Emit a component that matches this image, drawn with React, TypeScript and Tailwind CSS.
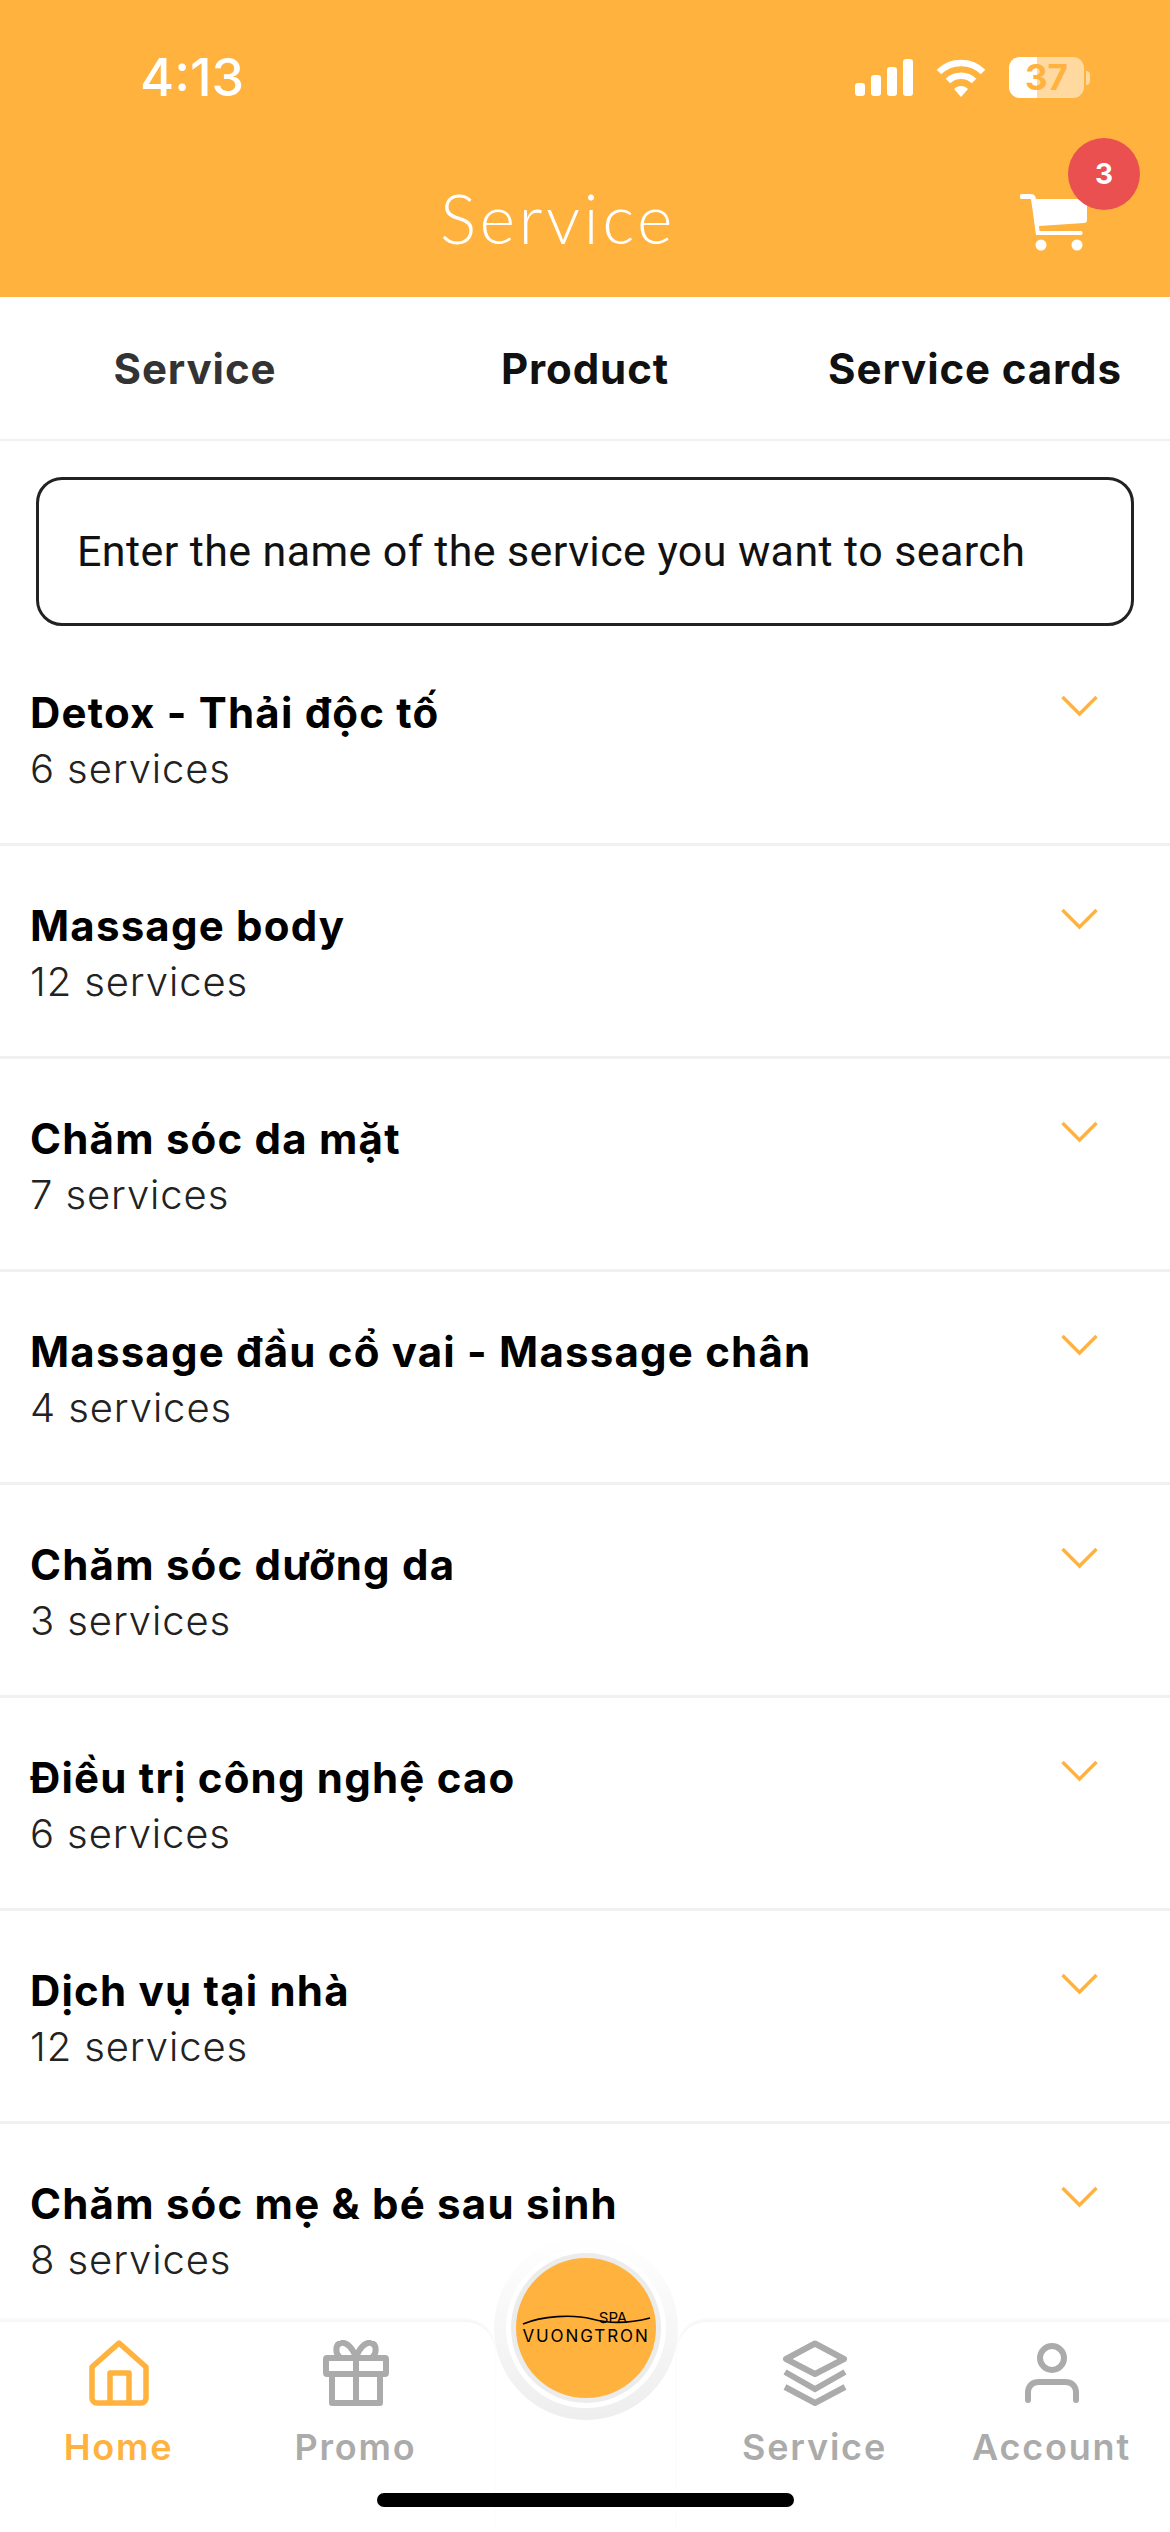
const categories = [
  { name: "Detox - Thải độc tố", count: "6 services" },
  { name: "Massage body", count: "12 services" },
  { name: "Chăm sóc da mặt", count: "7 services" },
  { name: "Massage đầu cổ vai - Massage chân", count: "4 services" },
  { name: "Chăm sóc dưỡng da", count: "3 services" },
  { name: "Điều trị công nghệ cao", count: "6 services" },
  { name: "Dịch vụ tại nhà", count: "12 services" },
  { name: "Chăm sóc mẹ & bé sau sinh", count: "8 services" },
];

const SignalIcon = () => (
  <svg width="58" height="37" viewBox="0 0 58 37" fill="white">
    <rect x="0" y="24" width="10" height="13" rx="3" />
    <rect x="16" y="16" width="10" height="21" rx="3" />
    <rect x="32" y="8" width="10" height="29" rx="3" />
    <rect x="48" y="0" width="10" height="37" rx="3" />
  </svg>
);

const WifiIcon = () => (
  <svg width="50" height="38" viewBox="0 0 50 38" fill="none" stroke="white" strokeWidth="6.5">
    <path d="M3 13 C15 1 35 1 47 13" />
    <path d="M12 22 C19 15 31 15 38 22" />
    <path d="M18 30 L25 38 L32 30 C28 26 22 26 18 30 Z" fill="white" stroke="none" />
  </svg>
);

const Battery = () => (
  <div className="flex items-center gap-[2px]">
    <div className="relative h-[41px] w-[75px] overflow-hidden rounded-[11px] bg-white/50">
      <div className="h-full w-[28px] bg-white" />
      <span className="absolute inset-0 flex items-center justify-center font-['Inter',sans-serif] text-[35px] font-bold text-[#ffb23e]">
        37
      </span>
    </div>
    <div className="h-[14px] w-[4px] rounded-r-full bg-white/50" />
  </div>
);

const CartIcon = () => (
  <svg width="68" height="60" viewBox="0 0 68 60" fill="white">
    <path d="M2 1 H11 C13 1 15 2 15.5 4 L16 6 H67 V27 C67 29 66 30 64 30 L19 33 L19.5 38 H61 C63 38 63 42 61 42 H16 L11 6 H2 C-1 6 -1 1 2 1 Z" />
    <circle cx="21" cy="52" r="5.5" />
    <circle cx="57" cy="52" r="5.5" />
  </svg>
);

const Chevron = () => (
  <svg width="37" height="22" viewBox="0 0 37 22" fill="none" stroke="#ffb23e" strokeWidth="3.4">
    <path d="M1.5 2 L18.5 19 L35.5 2" />
  </svg>
);

const HomeIcon = () => (
  <svg width="60" height="66" viewBox="0 0 60 66" fill="none" stroke="#ffb23e" strokeWidth="5.5" strokeLinejoin="round">
    <path d="M30 3 L57 27 V58 C57 61 55 63 52 63 H8 C5 63 3 61 3 58 V27 Z" />
    <path d="M21 63 V33 H40 V63" />
  </svg>
);

const GiftIcon = () => (
  <svg width="66" height="66" viewBox="0 0 66 66" fill="none" stroke="#ababab" strokeWidth="6">
    <rect x="3" y="18" width="60" height="16" rx="1" />
    <path d="M9 34 V63 H57 V34" strokeLinejoin="round" />
    <path d="M33 18 V63" />
    <path d="M33 17 C28 5 22 2 18 3 C12 4 12 14 17 17" />
    <path d="M33 17 C38 5 44 2 48 3 C54 4 54 14 49 17" />
  </svg>
);

const LayersIcon = () => (
  <svg width="66" height="66" viewBox="0 0 66 66" fill="none" stroke="#ababab" strokeWidth="6">
    <path d="M33 3.5 L62 19 L33 34 L4 19 Z" strokeLinejoin="round" />
    <path d="M3 32 L33 49 L63 32" />
    <path d="M3 47 L33 63 L63 47" />
  </svg>
);

const UserIcon = () => (
  <svg width="54" height="60" viewBox="0 0 54 60" fill="none" stroke="#ababab" strokeWidth="6" strokeLinecap="round">
    <circle cx="27" cy="15" r="12" />
    <path d="M3 57 V50 C3 42 8 39 14 39 H40 C46 39 51 42 51 50 V57" />
  </svg>
);

const NavItem = ({ label, icon, active }: { label: string; icon: JSX.Element; active?: boolean }) => (
  <div className="flex w-[237px] flex-col items-center">
    <div className="flex h-[66px] items-center">{icon}</div>
    <span
      className={`mt-[20px] font-['Inter',sans-serif] text-[36px] leading-[42px] font-semibold tracking-[1.8px] ${
        active ? "text-[#ffb23e]" : "text-[#ababab]"
      }`}
    >
      {label}
    </span>
  </div>
);

const Logo = () => (
  <div className="relative flex h-[140px] w-[140px] flex-col items-center rounded-full bg-[#ffb23e] pt-[53px] font-['Inter',sans-serif] text-black">
    <svg width="130" height="14" viewBox="0 0 130 14" fill="none" className="absolute top-[55px] left-[6px]">
      <path d="M1 11 C20 3 50 1 70 6 C88 11 105 11 128 5" stroke="black" strokeWidth="1.6" />
    </svg>
    <span className="ml-[54px] text-[15px] leading-[14px] font-normal">SPA</span>
    <span className="mt-[2px] text-[17px] leading-[18px] font-normal tracking-[1.9px]">VUONGTRON</span>
  </div>
);

export default function App() {
  return (
    <div className="relative flex h-[2532px] w-[1170px] flex-col overflow-hidden bg-white">
      <header className="h-[297px] shrink-0 bg-[#ffb23e] text-white">
        <div className="flex h-[156px] items-start justify-between pt-[53px] pr-[80px] pl-[140px]">
          <span className="font-['Inter',sans-serif] text-[52px] leading-[50px] font-medium">4:13</span>
          <div className="mt-[4px] flex items-center gap-[23px]">
            <SignalIcon />
            <WifiIcon />
            <Battery />
          </div>
        </div>
        <div className="relative flex items-center justify-center">
          <span className="pr-[54px] font-['Lato',sans-serif] text-[68px] leading-[124px] font-light tracking-[3.5px]">
            Service
          </span>
          <div className="absolute top-[37px] left-[1020px]">
            <CartIcon />
          </div>
          <div className="absolute top-[-18px] left-[1068px] flex h-[72px] w-[72px] items-center justify-center rounded-full bg-[#ea5050] font-['Inter',sans-serif] text-[28px] font-bold">
            3
          </div>
        </div>
      </header>

      <nav className="grid h-[144px] shrink-0 grid-cols-3 items-center border-b-[2px] border-[#f1f1f1] font-['Inter',sans-serif] text-[42px] font-bold tracking-[0.9px]">
        <span className="text-center text-[#333333]">Service</span>
        <span className="text-center text-[#111111]">Product</span>
        <span className="text-center text-[#111111]">Service cards</span>
      </nav>

      <div className="flex-1 overflow-hidden">
        <div className="px-[36px] pt-[36px] pb-[7px]">
          <div className="flex h-[149px] items-center rounded-[26px] border-[3px] border-[#222222] pl-[38px] font-['Roboto',sans-serif] text-[43px] tracking-[0.4px] text-[#111111]">
            Enter the name of the service you want to search
          </div>
        </div>
        {categories.map((item) => (
          <div key={item.name} className="flex h-[213px] items-start justify-between border-b-[3px] border-[#f1f1f1] pt-[52px] pr-[72px] pl-[30px]">
            <div className="font-['Inter',sans-serif]">
              <div className="text-[42px] leading-[56px] font-bold tracking-[1.2px] text-black">{item.name}</div>
              <div className="text-[40px] leading-[56px] font-light tracking-[0.9px] text-[#222222]">{item.count}</div>
            </div>
            <div className="pt-[10px]">
              <Chevron />
            </div>
          </div>
        ))}
      </div>

      <footer className="flex h-[210px] shrink-0 justify-between">
        <div className="flex h-full w-[495px] rounded-tr-[30px] bg-white pt-[18px] shadow-[0_-3px_3px_rgba(0,0,0,0.04)]">
          <NavItem label="Home" icon={<HomeIcon />} active />
          <NavItem label="Promo" icon={<GiftIcon />} />
        </div>
        <div className="flex h-full w-[493px] justify-end rounded-tl-[30px] bg-white pt-[18px] shadow-[0_-3px_3px_rgba(0,0,0,0.04)]">
          <NavItem label="Service" icon={<LayersIcon />} />
          <NavItem label="Account" icon={<UserIcon />} />
        </div>
      </footer>

      <div className="absolute top-[2236px] left-[494px] flex h-[184px] w-[184px] items-center justify-center rounded-full bg-gradient-to-b from-white to-[#eeeeee]">
        <div className="flex h-[160px] w-[160px] items-center justify-center rounded-full bg-white">
          <div className="flex h-[150px] w-[150px] items-center justify-center rounded-full bg-[#ececec]">
            <Logo />
          </div>
        </div>
      </div>

      <div className="absolute top-[2493px] left-[377px] h-[14px] w-[417px] rounded-full bg-black" />
    </div>
  );
}
